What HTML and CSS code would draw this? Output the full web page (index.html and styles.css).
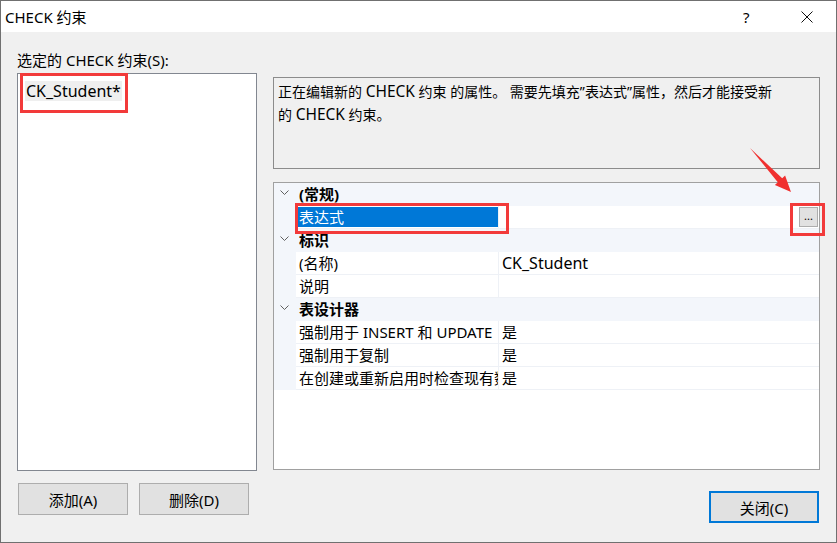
FILE: index.html
```html
<!DOCTYPE html>
<html lang="zh-CN">
<head>
    <meta charset="UTF-8">
    <title>CHECK 约束</title>
    <link rel="stylesheet" href="styles.css">
</head>
<body>
    <div class="dialog">
        <div class="titlebar">
            <span class="title">CHECK 约束</span>
            <span class="help">?</span>
            <span class="close">
                <svg width="12" height="12" viewBox="0 0 12 12"><path d="M0.5 0.5 L11.5 11.5 M11.5 0.5 L0.5 11.5" stroke="#111" stroke-width="1" fill="none"/></svg>
            </span>
        </div>
        <div class="body">
            <div class="left">
                <div class="list-label">选定的 CHECK 约束(S):</div>
                <div class="listbox">
                    <span class="list-item">CK_Student*</span>
                    <div class="mark mark-list"></div>
                </div>
                <div class="buttons">
                    <button class="btn">添加(A)</button>
                    <button class="btn">删除(D)</button>
                </div>
            </div>
            <div class="right">
                <div class="desc">正在编辑新的 <span class="en">CHECK</span> 约束 的属性。 需要先填充”表达式”属性，然后才能接受新<br>的 <span class="en">CHECK</span> 约束。</div>
                <div class="grid">
                    <div class="cat">
                        <span class="gutter"><svg width="9" height="6" viewBox="0 0 9 6"><path d="M0.5 0.5 L4.5 4.5 L8.5 0.5" stroke="#606060" fill="none"/></svg></span>
                        <span class="cat-name">(常规)</span>
                    </div>
                    <div class="row">
                        <span class="gutter"></span>
                        <span class="name"><span class="selected">表达式</span></span>
                        <span class="value"><span class="dots">...</span></span>
                    </div>
                    <div class="cat">
                        <span class="gutter"><svg width="9" height="6" viewBox="0 0 9 6"><path d="M0.5 0.5 L4.5 4.5 L8.5 0.5" stroke="#606060" fill="none"/></svg></span>
                        <span class="cat-name">标识</span>
                    </div>
                    <div class="row">
                        <span class="gutter"></span>
                        <span class="name">(名称)</span>
                        <span class="value"><span class="en-big">CK_Student</span></span>
                    </div>
                    <div class="row">
                        <span class="gutter"></span>
                        <span class="name">说明</span>
                        <span class="value"></span>
                    </div>
                    <div class="cat">
                        <span class="gutter"><svg width="9" height="6" viewBox="0 0 9 6"><path d="M0.5 0.5 L4.5 4.5 L8.5 0.5" stroke="#606060" fill="none"/></svg></span>
                        <span class="cat-name">表设计器</span>
                    </div>
                    <div class="row">
                        <span class="gutter"></span>
                        <span class="name">强制用于 INSERT 和 UPDATE</span>
                        <span class="value">是</span>
                    </div>
                    <div class="row">
                        <span class="gutter"></span>
                        <span class="name">强制用于复制</span>
                        <span class="value">是</span>
                    </div>
                    <div class="row">
                        <span class="gutter"></span>
                        <span class="name">在创建或重新启用时检查现有数据</span>
                        <span class="value">是</span>
                    </div>
                    <div class="mark mark-expr"></div>
                    <div class="mark mark-dots"></div>
                </div>
                <div class="footer">
                    <button class="btn btn-default">关闭(C)</button>
                </div>
            </div>
        </div>
        <svg class="arrow" width="60" height="60" viewBox="0 0 60 60">
            <polygon points="10,8 42.2,38.3 45.1,35.5 51,52 34.9,45.1 37.8,42.3" fill="#f0302f"/>
        </svg>
    </div>
</body>
</html>
```

FILE: styles.css
```css
body {
    margin: 0;
    font-family: "Noto Sans", "Noto Sans CJK SC", sans-serif;
    font-size: 15px;
    color: #000;
    background: #fff;
}
.dialog {
    position: relative;
    width: 837px;
    height: 543px;
    box-sizing: border-box;
    border: 1px solid #707070;
    background-color: #f0f0f0;
}
.titlebar {
    height: 31px;
    background: #fff;
    display: flex;
    align-items: center;
    padding-left: 4px;
}
.title {
    flex: 1;
}
.help {
    width: 12px;
    margin-right: 46px;
    font-size: 15px;
}
.close {
    display: flex;
    width: 12px;
    margin-right: 23px;
}
.body {
    display: flex;
    gap: 16px;
    padding: 18px 0 0 16px;
}
.left {
    width: 240px;
}
.list-label {
    height: 20px;
    line-height: 20px;
}
.listbox {
    position: relative;
    margin-top: 3px;
    height: 398px;
    box-sizing: border-box;
    border: 1px solid #828790;
    background: #fff;
    padding: 7px 0 0 7px;
}
.list-item {
    display: inline-block;
    background: #efefef;
    height: 20px;
    line-height: 20px;
    padding: 0 1px;
    font-size: 16px;
}
.buttons {
    display: flex;
    gap: 11px;
    margin-top: 12px;
    padding-left: 1px;
}
.btn {
    width: 110px;
    height: 32px;
    box-sizing: border-box;
    border: 1px solid #adadad;
    background: #e1e1e1;
    font-family: inherit;
    font-size: 15px;
    color: #000;
    padding: 0;
}
.btn-default {
    border: 2px solid #0078d7;
}
.right {
    width: 547px;
    padding-top: 27px;
}
.desc {
    height: 92px;
    box-sizing: border-box;
    border: 1px solid #8c8c8c;
    padding: 2px 4px;
    font-size: 14px;
    line-height: 22px;
    white-space: nowrap;
    overflow: hidden;
}
.en {
    font-size: 15.5px;
}
.en-big {
    font-size: 16px;
}
.grid {
    position: relative;
    margin-top: 13px;
    height: 288px;
    box-sizing: border-box;
    border: 1px solid #a0a0a0;
    background: #fff;
}
.cat, .row {
    display: flex;
    height: 23px;
    line-height: 22px;
}
.cat {
    background: #f3f6fb;
}
.gutter {
    width: 22px;
    flex: none;
    background: #f3f6fb;
    display: flex;
    align-items: center;
    justify-content: center;
}
.gutter svg {
    margin-top: -4px;
    margin-left: -2px;
}
.cat-name {
    font-weight: bold;
    padding-left: 3px;
}
.name {
    width: 203px;
    flex: none;
    box-sizing: border-box;
    border-right: 1px solid #eef1f6;
    border-bottom: 1px solid #eef1f6;
    padding-left: 3px;
    white-space: nowrap;
    overflow: hidden;
}
.value {
    flex: 1;
    border-bottom: 1px solid #eef1f6;
    padding-left: 3px;
    display: flex;
}
.row:nth-child(2) .name {
    padding: 1px 0 1px 1px;
}
.selected {
    display: block;
    height: 20px;
    line-height: 20px;
    background: #0078d7;
    color: #fff;
    padding-left: 2px;
}
.row:nth-child(2) .value {
    justify-content: flex-end;
    align-items: center;
}
.dots {
    width: 19px;
    height: 20px;
    box-sizing: border-box;
    border: 1px solid #adadad;
    background: #e1e1e1;
    font-size: 11px;
    line-height: 16px;
    text-align: center;
    margin-right: 1px;
}
.footer {
    display: flex;
    justify-content: flex-end;
    margin-top: 21px;
    padding-right: 1px;
}
.mark {
    position: absolute;
    border: 3px solid #f23a3a;
    box-sizing: border-box;
}
.mark-list {
    left: 2px;
    top: -1px;
    width: 108px;
    height: 40px;
}
.mark-expr {
    left: 21px;
    top: 20px;
    width: 214px;
    height: 31px;
}
.mark-dots {
    left: 516px;
    top: 20px;
    width: 35px;
    height: 33px;
}
.arrow {
    position: absolute;
    left: 739px;
    top: 139px;
}
```
